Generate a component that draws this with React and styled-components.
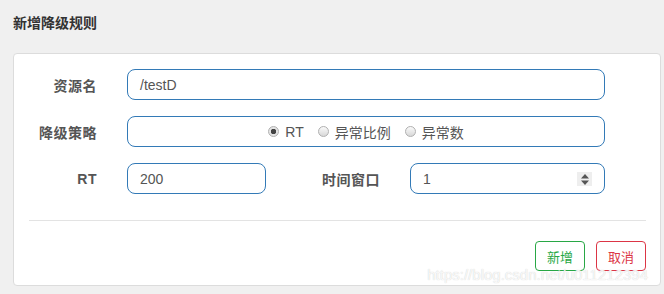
import React from "react";
import styled, { createGlobalStyle } from "styled-components";

const GlobalStyle = createGlobalStyle`
  html, body {
    margin: 0;
    padding: 0;
    background: #f0f0f0;
    font-family: "Liberation Sans", "Noto Sans CJK SC", sans-serif;
  }
`;

export default function App() {
  return (
    <>
      <GlobalStyle />
      <Page>
        <Title>新增降级规则</Title>
        <Card>
          <Row>
            <Label>资源名</Label>
            <Input width={478}>/testD</Input>
          </Row>
          <Row>
            <Label>降级策略</Label>
            <RadioBox>
              <Radio checked label="RT" />
              <Radio label="异常比例" />
              <Radio label="异常数" />
            </RadioBox>
          </Row>
          <Row>
            <Label>RT</Label>
            <Input width={139}>200</Input>
            <Label width={82} gap={32}>时间窗口</Label>
            <Input width={195}>
              1
              <Spinner>
                <svg width="8" height="11" viewBox="0 0 8 11">
                  <path d="M4 0 L8 4.5 H0 Z" fill="#555" />
                  <path d="M0 6.5 H8 L4 11 Z" fill="#555" />
                </svg>
              </Spinner>
            </Input>
          </Row>
          <Divider />
          <Footer>
            <Button color="#28a745">新增</Button>
            <Button color="#dc3545">取消</Button>
          </Footer>
          <Watermark>https://blog.csdn.net/u011212394</Watermark>
        </Card>
      </Page>
    </>
  );
}

function Radio({ checked, label }) {
  return (
    <RadioItem>
      <Dot checked={checked} />
      {label}
    </RadioItem>
  );
}

const Page = styled.div`
  width: 664px;
  height: 294px;
  padding: 14px 3px 0 13px;
  box-sizing: border-box;
`;

const Title = styled.div`
  font-size: 14px;
  font-weight: bold;
  color: #333;
  line-height: 18px;
  height: 26px;
`;

const Card = styled.div`
  position: relative;
  background: #fff;
  border: 1px solid #dcdcdc;
  border-radius: 4px;
  margin-top: 13px;
  padding: 15px 14px 14px 15px;
  width: 648px;
  box-sizing: border-box;
`;

const Row = styled.div`
  display: flex;
  align-items: center;
  height: 31px;
  margin-bottom: 16px;
`;

const Label = styled.div`
  width: ${(p) => p.width || 68}px;
  margin-left: ${(p) => p.gap || 0}px;
  margin-right: 30px;
  text-align: right;
  font-size: 14px;
  font-weight: bold;
  color: #555;
  letter-spacing: 0.5px;
`;

const Input = styled.div`
  position: relative;
  display: flex;
  align-items: center;
  width: ${(p) => p.width}px;
  height: 31px;
  box-sizing: border-box;
  border: 1px solid #337ab7;
  border-radius: 8px;
  padding: 0 12px;
  font-size: 14px;
  color: #555;
`;

const Spinner = styled.div`
  position: absolute;
  right: 12px;
  top: 8px;
  width: 15px;
  height: 14px;
  background: #eee;
  display: flex;
  align-items: center;
  justify-content: center;
`;

const RadioBox = styled(Input)`
  width: 478px;
  justify-content: center;
  gap: 14px;
`;

const RadioItem = styled.label`
  display: flex;
  align-items: center;
  gap: 6px;
  font-size: 14px;
  color: #555;
`;

const Dot = styled.span`
  width: 11px;
  height: 11px;
  border-radius: 50%;
  border: 1px solid #b0b0b0;
  background: ${(p) =>
    p.checked
      ? "radial-gradient(circle, #444 0 2.5px, #e4e4e4 3px)"
      : "linear-gradient(#fafafa, #d8d8d8)"};
  box-sizing: border-box;
`;

const Divider = styled.div`
  height: 1px;
  background: #e3e3e3;
  margin-top: 26px;
`;

const Footer = styled.div`
  display: flex;
  justify-content: flex-end;
  gap: 11px;
  margin-top: 20px;
`;

const Button = styled.button`
  width: 50px;
  height: 30px;
  border: 1px solid ${(p) => p.color};
  border-radius: 4px;
  background: #fff;
  color: ${(p) => p.color};
  font-family: "Liberation Sans", "Noto Sans CJK SC", sans-serif;
  font-size: 13px;
  padding: 0;
`;

const Watermark = styled.div`
  position: absolute;
  right: 12px;
  bottom: 2px;
  font-size: 15px;
  color: rgba(255, 255, 255, 0.85);
  text-shadow: 0 0 1px #c8c8c8;
  pointer-events: none;
`;
